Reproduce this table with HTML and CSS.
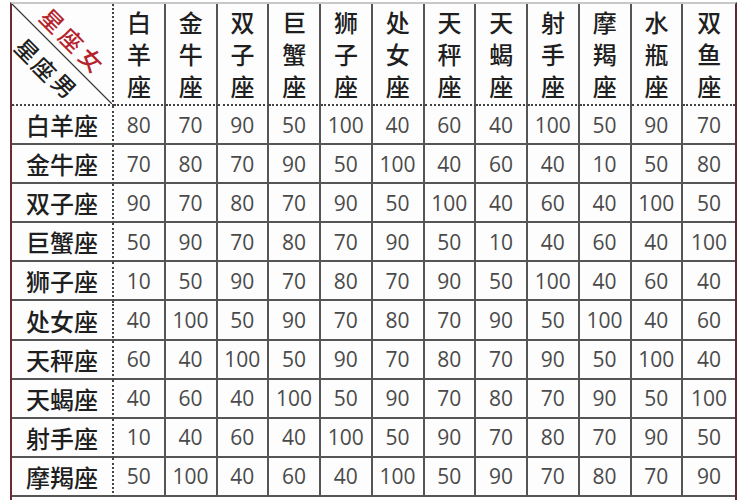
FILE: index.html
```html
<!DOCTYPE html>
<html lang="zh">
<head>
<meta charset="utf-8">
<link rel="stylesheet" href="styles.css">
</head>
<body>
<div class="sheet" id="sheet">
  <div class="corner">
    <span class="cl f1">星</span><span class="cl f2">座</span><span class="cl f3">女</span>
    <span class="cl m1">星</span><span class="cl m2">座</span><span class="cl m3">男</span>
  </div>
</div>
<script src="app.js"></script>
</body>
</html>
```
FILE: app.js
```js
var names = ["白羊座","金牛座","双子座","巨蟹座","狮子座","处女座","天秤座","天蝎座","射手座","摩羯座","水瓶座","双鱼座"];
var data = [
 [80,70,90,50,100,40,60,40,100,50,90,70],
 [70,80,70,90,50,100,40,60,40,10,50,80],
 [90,70,80,70,90,50,100,40,60,40,100,50],
 [50,90,70,80,70,90,50,10,40,60,40,100],
 [10,50,90,70,80,70,90,50,100,40,60,40],
 [40,100,50,90,70,80,70,90,50,100,40,60],
 [60,40,100,50,90,70,80,70,90,50,100,40],
 [40,60,40,100,50,90,70,80,70,90,50,100],
 [10,40,60,40,100,50,90,70,80,70,90,50],
 [50,100,40,60,40,100,50,90,70,80,70,90]
];
var sheet = document.getElementById("sheet");
var html = "";
names.forEach(function(n){
  html += '<div class="hcell">' + n.split("").map(function(c){return "<span>"+c+"</span>";}).join("") + '</div>';
});
data.forEach(function(row, i){
  html += '<div class="rlabel">' + names[i] + '</div>';
  row.forEach(function(v){ html += '<div class="num">' + v + '</div>'; });
});
sheet.insertAdjacentHTML("beforeend", html);
```
FILE: styles.css
```css
html, body {
  margin: 0;
  padding: 0;
  background: #ffffff;
  overflow: hidden;
}
body {
  font-family: "Noto Sans CJK SC", "Noto Sans", sans-serif;
}
.sheet {
  box-sizing: border-box;
  width: 727px;
  margin: 2px 0 0 10px;
  padding-bottom: 8px;
  display: grid;
  grid-template-columns: 102px repeat(12, 1fr);
  grid-template-rows: 102px;
  grid-auto-rows: 39.1px;
  border-left: 2px solid #6e2a33;
  border-right: 2px solid #5e2a31;
  border-top: 2px solid #c8c8c8;
  background: #fdfdfd;
}
.sheet > div {
  box-sizing: border-box;
  border-right: 2px solid #555;
  border-bottom: 2px solid #555;
}
.sheet > .hcell:nth-child(13) { border-right: none; }
.sheet > .num:nth-child(13n) { border-right: none; }
.corner {
  position: relative;
  border-right: 2px dotted #444 !important;
  border-bottom: 2px dotted #444 !important;
  background: linear-gradient(to top right, transparent calc(50% - 1.2px), #3a3a3a 50%, transparent calc(50% + 1.2px));
}
.cl {
  position: absolute;
  font-size: 23px;
  line-height: 23px;
  font-weight: 500;
  transform: rotate(45deg);
}
.f1, .f2, .f3 { color: #b5232c; }
.m1, .m2, .m3 { color: #1e1e1e; }
.f1 { left: 29px; top: 5px; }
.f2 { left: 48px; top: 24px; }
.f3 { left: 68px; top: 44px; }
.m1 { left: 4px; top: 35px; }
.m2 { left: 21px; top: 53px; }
.m3 { left: 41px; top: 70px; }
.hcell {
  border-bottom: 2px dotted #444 !important;
  display: flex;
  flex-direction: column;
  align-items: center;
  justify-content: center;
  font-size: 24px;
  line-height: 32px;
  font-weight: 500;
  color: #1f1f1f;
}
.rlabel {
  border-right: 2px dotted #444 !important;
  display: flex;
  align-items: center;
  justify-content: center;
  font-size: 24px;
  font-weight: 500;
  color: #1f1f1f;
}
.num {
  display: flex;
  align-items: center;
  justify-content: center;
  font-family: "Open Sans", sans-serif;
  font-size: 21px;
  color: #4a4a4a;
}
```
